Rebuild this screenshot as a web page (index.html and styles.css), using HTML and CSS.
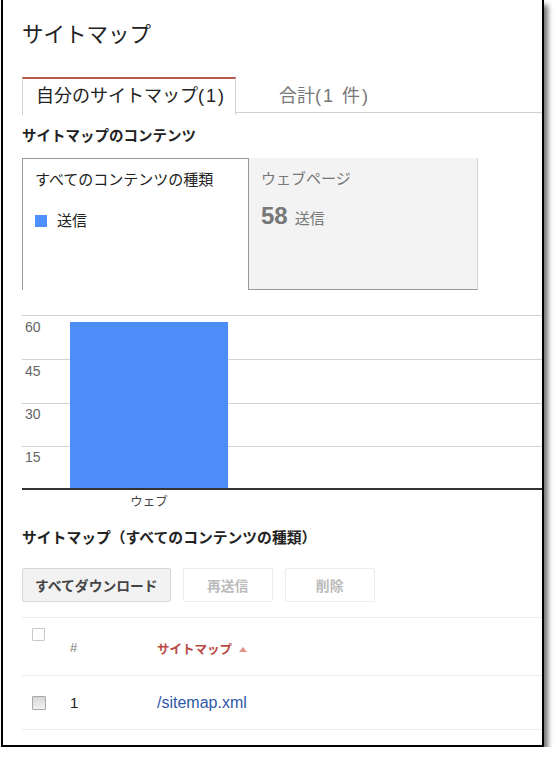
FILE: index.html
```html
<!DOCTYPE html>
<html lang="ja">

<head>
    <meta charset="UTF-8">
    <title>サイトマップ</title>
    <link rel="stylesheet" href="styles.css">
</head>

<body>
    <div class="frame">
        <div class="page">
            <h1 class="page-title">サイトマップ</h1>

            <div class="tabs">
                <div class="tab tab-active">自分のサイトマップ<span class="paren">(1)</span></div>
                <div class="tab">合計<span class="paren">(1 件)</span></div>
            </div>

            <h2 class="section-title">サイトマップのコンテンツ</h2>
            <div class="panels">
                <div class="panel panel-selected">
                    <div class="panel-label">すべてのコンテンツの種類</div>
                    <div class="legend"><span class="legend-swatch"></span>送信</div>
                </div>
                <div class="panel panel-other">
                    <div class="panel-label">ウェブページ</div>
                    <div class="panel-count"><strong>58</strong> 送信</div>
                </div>
            </div>

            <!-- chart: 60 = gridline top, 2.9px per unit -->
            <svg class="chart" width="520" height="205" viewBox="0 0 520 205">
                <g stroke="#d3d3d3" stroke-width="1">
                    <line x1="0" y1="10.5" x2="520" y2="10.5" />
                    <line x1="0" y1="54.5" x2="520" y2="54.5" />
                    <line x1="0" y1="98.5" x2="520" y2="98.5" />
                    <line x1="0" y1="141.5" x2="520" y2="141.5" />
                </g>
                <rect x="48" y="17" width="158" height="167" fill="#4c8df7" />
                <rect x="0" y="183" width="520" height="2" fill="#333" />
                <g class="axis-label">
                    <text x="3" y="27">60</text>
                    <text x="3" y="71">45</text>
                    <text x="3" y="114">30</text>
                    <text x="3" y="157">15</text>
                    <text class="x-label" x="127" y="201" text-anchor="middle">ウェブ</text>
                </g>
            </svg>

            <h2 class="section-title section-list">サイトマップ（すべてのコンテンツの種類）</h2>
            <div class="actions">
                <button class="btn">すべてダウンロード</button>
                <button class="btn btn-disabled">再送信</button>
                <button class="btn btn-disabled">削除</button>
            </div>

            <table class="sitemaps">
                <thead>
                    <tr>
                        <th class="col-check"><span class="check"></span></th>
                        <th class="col-num">#</th>
                        <th class="col-name">サイトマップ <svg width="8" height="5" viewBox="0 0 8 5"><polygon points="0,5 4,0 8,5" fill="#e0928c" /></svg></th>
                    </tr>
                </thead>
                <tbody>
                    <tr>
                        <td class="col-check"><span class="check check-row"></span></td>
                        <td class="col-num">1</td>
                        <td class="col-name"><a href="#">/sitemap.xml</a></td>
                    </tr>
                </tbody>
            </table>
        </div>
    </div>
</body>

</html>
```

FILE: styles.css
```css
body {
    margin: 0;
    padding: 0;
    background: #fff;
    font-family: "Liberation Sans", "Noto Sans CJK JP", sans-serif;
    color: #222;
}

.frame {
    margin-left: 1px;
    width: 539px;
    height: 745px;
    border: 2px solid #000;
    border-top: none;
    overflow: hidden;
    box-shadow: 4px 5px 5px rgba(0, 0, 0, 0.55);
}

.page {
    padding: 21px 0 0 19px;
}

.page-title {
    margin: 0;
    font-size: 21.5px;
    font-weight: normal;
    line-height: 28px;
}

.tabs {
    display: flex;
    margin-top: 28px;
    height: 35px;
    border-bottom: 1px solid #d0d0d0;
}

.tab {
    padding: 7px 13px 6px;
    font-size: 18px;
    line-height: 21px;
    color: #777;
}

.tab .paren {
    letter-spacing: 2px;
}

.tab-active {
    height: 23px;
    margin-right: 30px;
    padding-right: 9px;
    border-top: 2px solid #b55a4d;
    border-left: 1px solid #d0d0d0;
    border-right: 1px solid #d0d0d0;
    background: #fff;
    color: #222;
}

.tab:not(.tab-active) {
    padding-top: 9px;
}

.section-title {
    margin: 14px 0 13px;
    font-size: 14.5px;
    line-height: 18px;
    font-weight: bold;
}

.panels {
    display: flex;
    height: 132px;
}

.panel {
    box-sizing: border-box;
    padding: 11px 12px;
    font-size: 15px;
    line-height: 20px;
}

.panel-selected {
    width: 227px;
    border: 1px solid #999;
    border-bottom: none;
}

.panel-other {
    width: 229px;
    background: #f3f3f3;
    border-bottom: 1px solid #999;
    border-right: 1px solid #d4d4d4;
    color: #777;
}

.legend {
    display: flex;
    align-items: center;
    margin-top: 21px;
}

.legend-swatch {
    width: 12px;
    height: 12px;
    margin-right: 10px;
    background: #4d90fe;
}

.panel-count {
    margin-top: 13px;
    line-height: 28px;
}

.panel-count strong {
    font-size: 24px;
    margin-right: 3px;
}

.chart {
    display: block;
    margin-top: 15px;
}

.axis-label text {
    font-family: "Liberation Sans", "Noto Sans CJK JP", sans-serif;
    font-size: 14px;
    fill: #666;
}

.axis-label .x-label {
    font-size: 12.5px;
    fill: #444;
}

.section-list {
    margin: 19px 0 21px;
    font-size: 14.8px;
}

.actions {
    display: flex;
    gap: 12px;
    margin-bottom: 15px;
}

.btn {
    box-sizing: border-box;
    height: 34px;
    min-width: 89px;
    padding: 0 12px;
    font-family: "Liberation Sans", "Noto Sans CJK JP", sans-serif;
    font-size: 13.8px;
    font-weight: bold;
    color: #444;
    background: #f2f2f2;
    border: 1px solid #d8d8d8;
    border-radius: 2px;
}

.btn-disabled {
    min-width: 90px;
    background: #fff;
    border-color: #ececec;
    color: #bbb;
}

.sitemaps {
    width: 520px;
    border-collapse: collapse;
    border-top: 1px solid #ebebeb;
}

.sitemaps thead tr {
    height: 58px;
}

.sitemaps tbody tr {
    height: 54px;
}

.sitemaps th,
.sitemaps td {
    padding: 0 10px;
    text-align: left;
    border-bottom: 1px solid #ebebeb;
}

.sitemaps th {
    vertical-align: top;
    padding-top: 22px;
    font-size: 13px;
    font-weight: normal;
    color: #777;
}

.sitemaps td {
    font-size: 15px;
}

.sitemaps .col-check {
    width: 18px;
}

.sitemaps th.col-check {
    padding-top: 10px;
}

.sitemaps .col-num {
    width: 67px;
}

.sitemaps th.col-name {
    padding-top: 21px;
    font-size: 12.5px;
    font-weight: bold;
    color: #b94a45;
}

.col-name svg {
    margin-left: 4px;
    vertical-align: 2px;
}

.check {
    display: block;
    box-sizing: border-box;
    width: 13px;
    height: 13px;
    border: 1px solid #c8c8c8;
    border-radius: 1px;
    background: #fff;
}

.check-row {
    width: 14px;
    height: 14px;
    border-color: #a8a8a8;
    background: linear-gradient(#d6d6d6, #f2f2f2);
}

.sitemaps a {
    font-size: 16px;
    color: #2f58a8;
    text-decoration: none;
}
```
